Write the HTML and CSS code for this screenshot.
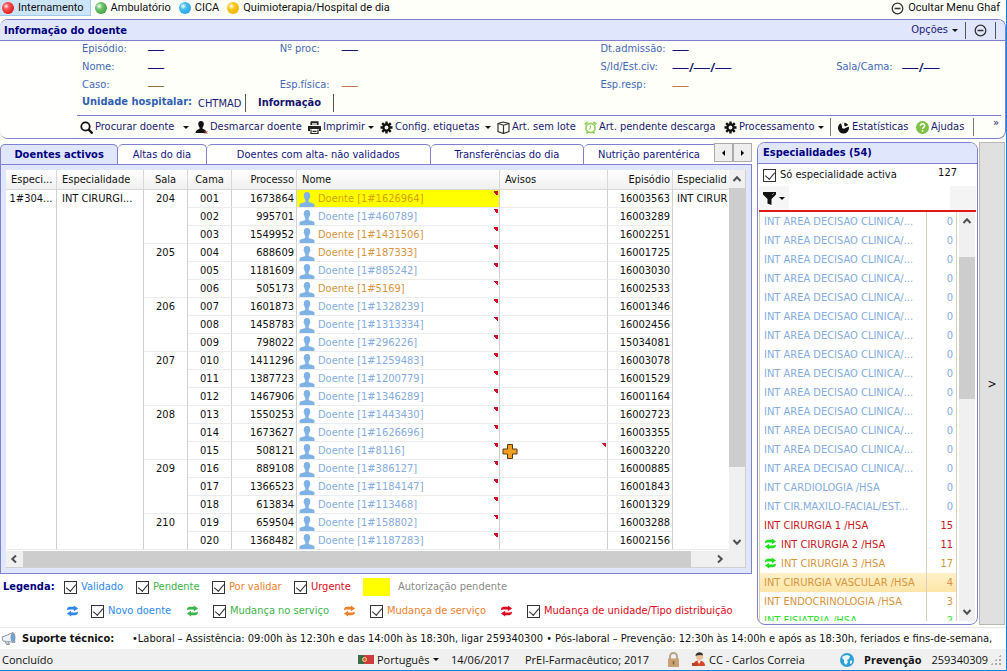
FILE: index.html
```
<!DOCTYPE html>
<html lang="pt">
<head>
<meta charset="utf-8">
<title>Informação do doente</title>
<link rel="stylesheet" href="styles.css">
</head>
<body>
<svg class="defs" aria-hidden="true">
  <symbol id="person" viewBox="0 0 16 15"><path d="M8 0c2.300 0 3.300 1.500 3.100 3.600C11.700 4 11.300 5.500 10.700 5.700 10.500 7 10 7.500 9.700 8v2c1.500.9 5 1 5.800 2.400V15H.5v-2.600C1.300 11 4.800 10.900 6.300 10V8C6 7.500 5.500 7 5.300 5.700 4.700 5.500 4.300 4 4.900 3.600 4.700 1.500 5.700 0 8 0z" fill="#7fb2e5"/></symbol>
  <symbol id="swap" viewBox="0 0 14 12"><path d="M1 5.400c0-2.400 1.200-3.900 3-3.900h4.500V0L13 3.200 8.500 6.200V4.500H4.200C2.800 4.500 2 4.600 1 5.400zM13 6.600c0 2.400-1.200 3.900-3 3.900H5.500V12L1 8.800l4.500-3v1.700h4.300c1.400 0 2.200-.1 3.200-.9z" fill="currentColor"/></symbol>
  <symbol id="gear" viewBox="0 0 14 14"><path fill="none" stroke="#111" stroke-width="2.600" d="M7 .5v3M7 10.500v3M.5 7h3M10.500 7h3M2.400 2.400l2 2M9.600 9.600l2 2M2.400 11.600l2-2M9.600 4.400l2-2"/><circle cx="7" cy="7" r="3.300" fill="none" stroke="#111" stroke-width="2.400"/></symbol>
  <symbol id="minus" viewBox="0 0 13 13"><circle cx="6.500" cy="6.500" r="5.300" fill="none" stroke="#333" stroke-width="1.300"/><path d="M3.500 6.500h6" stroke="#333" stroke-width="1.600"/></symbol>
  <symbol id="chev" viewBox="0 0 10 10"><path d="M1.500 7L5 3.300 8.500 7" fill="none" stroke="#505050" stroke-width="2"/></symbol>
</svg>

<nav class="menu">
  <button class="menu-item active"><span class="ball red"></span>Internamento</button>
  <button class="menu-item"><span class="ball green"></span>Ambulatório</button>
  <button class="menu-item"><span class="ball blue"></span>CICA</button>
  <button class="menu-item"><span class="ball gold"></span>Quimioterapia/Hospital de dia</button>
  <button class="menu-item hide-menu"><svg class="i13"><use href="#minus"/></svg>Ocultar Menu Ghaf</button>
</nav>

<section class="patient">
  <header class="patient-head">
    <h1>Informação do doente</h1>
    <button class="options">Opções <span class="caret"></span></button>
    <button class="collapse" aria-label="Recolher"><svg class="i13"><use href="#minus"/></svg></button>
  </header>
  <div class="patient-body">
    <div class="photo"></div>
    <div class="patient-main">
      <dl class="facts">
        <div><dt>Episódio:</dt><dd>—</dd></div>
        <div><dt>Nº proc:</dt><dd>—</dd></div>
        <div><dt>Dt.admissão:</dt><dd>—</dd></div>
        <div></div>
        <div><dt>Nome:</dt><dd>—</dd></div>
        <div></div>
        <div><dt>S/Id/Est.civ:</dt><dd>—<b>/</b>—<b>/</b>—</dd></div>
        <div><dt>Sala/Cama:</dt><dd>—<b>/</b>—</dd></div>
        <div><dt>Caso:</dt><dd class="olive">—</dd></div>
        <div><dt>Esp.física:</dt><dd class="tan">—</dd></div>
        <div><dt>Esp.resp:</dt><dd class="tan">—</dd></div>
        <div></div>
      </dl>
      <div class="unit">
        <strong>Unidade hospitalar:</strong><span class="unit-name">CHTMAD</span>
        <button class="unit-info">Informação</button>
      </div>
      <div class="toolbar">
        <button class="w-search"><svg class="i13" viewBox="0 0 13 13"><circle cx="5.500" cy="5.500" r="4.200" fill="none" stroke="#111" stroke-width="1.800"/><path d="M8.500 8.500l4 4" stroke="#111" stroke-width="2.400"/></svg>Procurar doente<span class="caret"></span></button>
        <button class="w-clear"><svg class="i13" viewBox="0 0 13 13"><path d="M6 0c2 0 3 1.400 2.800 3.300C8.700 5 8 6 7.500 6.600v1.200c1.200.8 3.900 1 4.300 4.200H.5c.3-3.200 3-3.400 4.100-4.200V6.600C4 6 3.400 5 3.300 3.300 3.100 1.400 4 0 6 0z" fill="#111"/><path d="M9.500 10l3 3M12.500 10l-3 3" stroke="#c55" stroke-width="1"/></svg>Desmarcar doente</button>
        <button class="w-print"><svg class="i13" viewBox="0 0 13 13"><path d="M3 1h7v3H3zM0 5h13v5h-2V8H2v2H0z" fill="#222"/><path d="M3 .8h7V4M3 4V.8M3 8.500v4h7v-4M4.500 10.300h4" fill="none" stroke="#222" stroke-width="1.200"/><path d="M4 2h5v2H4z" fill="#bbb"/></svg>Imprimir<span class="caret"></span></button>
        <button class="w-config"><svg class="i13"><use href="#gear"/></svg>Config. etiquetas<span class="caret"></span></button>
        <button class="w-lot"><svg class="i13" viewBox="0 0 13 13"><path d="M1 2.500L6 1l6 1.500v8L6.500 12.500 1 10.500zM1 2.500l5.500 1.700L12 2.500M6.500 4.200v8.300" fill="none" stroke="#333" stroke-width="1.200"/></svg>Art. sem lote</button>
        <button class="w-alarm"><svg class="i13" viewBox="0 0 13 13"><circle cx="6.500" cy="7" r="4.600" fill="none" stroke="#8fd05a" stroke-width="1.700"/><path d="M.8 3.500L3.500.9M12.200 3.500L9.500.9M2.500 12.500l1.500-2M10.500 12.500L9 10.500" stroke="#8fd05a" stroke-width="1.800"/><path d="M6.500 4.500V7.500L4.800 8.500" fill="none" stroke="#8fd05a"/></svg>Art. pendente descarga</button>
        <button class="w-proc"><svg class="i13"><use href="#gear"/></svg>Processamento<span class="caret"></span></button>
        <button class="w-stats sep-left"><svg class="i13" viewBox="0 0 13 13"><circle cx="6.500" cy="7" r="5.500" fill="#111"/><path d="M6.500 7L3.800 0M6.500 7l5.800-2.500M6.500 7v-7" stroke="#fffffa" stroke-width="1.500"/><circle cx="6.500" cy="6" r="1.600" fill="#fffffa"/></svg>Estatísticas</button>
        <button class="w-help"><svg class="i13" viewBox="0 0 13 13"><circle cx="6.500" cy="6.500" r="6.500" fill="#7cc142"/><path d="M4.300 5c0-3 4.600-2.800 4.400-.1C8.600 6.300 6.600 6.300 6.500 8M6.500 9v1.700" fill="none" stroke="#fff" stroke-width="1.500"/></svg>Ajudas</button>
        <button class="more sep-left" aria-label="Mais">»</button>
      </div>
    </div>
  </div>
</section>

<main class="work">
  <div class="left">
    <div class="tabs">
      <div class="tablist" role="tablist">
        <button role="tab" class="tab t1 on">Doentes activos</button>
        <button role="tab" class="tab t2">Altas do dia</button>
        <button role="tab" class="tab t3">Doentes com alta- não validados</button>
        <button role="tab" class="tab t4">Transferências do dia</button>
        <button role="tab" class="tab t5">Nutrição parentérica</button>
      </div>
      <button class="tabnav" aria-label="Anterior"><span class="tri tri-l"></span></button>
      <button class="tabnav" aria-label="Seguinte"><span class="tri tri-r"></span></button>
    </div>
    <div class="panel">
      <div class="grid">
        <div class="table-wrap">
          <table>
            <colgroup><col class="c1"><col class="c2"><col class="c3"><col class="c3"><col class="c5"><col><col class="c7"><col class="c5"><col class="c9"></colgroup>
            <thead><tr><th>Especi...</th><th>Especialidade</th><th class="c">Sala</th><th class="c">Cama</th><th class="r">Processo</th><th>Nome</th><th>Avisos</th><th class="r">Episódio</th><th>Especialid</th></tr></thead>
            <tbody>
              <tr><td rowspan="20" class="c">1#304...</td><td rowspan="20">INT CIRURGI...</td><td rowspan="3" class="c">204</td><td class="c">001</td><td class="r">1673864</td><td class="n o hl"><svg><use href="#person"/></svg>Doente [1#1626964]</td><td></td><td class="r">16003563</td><td rowspan="20">INT CIRUR</td></tr>
              <tr><td class="c">002</td><td class="r">995701</td><td class="n"><svg><use href="#person"/></svg>Doente [1#460789]</td><td></td><td class="r">16003289</td></tr>
              <tr><td class="c">003</td><td class="r">1549952</td><td class="n o"><svg><use href="#person"/></svg>Doente [1#1431506]</td><td></td><td class="r">16002251</td></tr>
              <tr><td rowspan="3" class="c">205</td><td class="c">004</td><td class="r">688609</td><td class="n o"><svg><use href="#person"/></svg>Doente [1#187333]</td><td></td><td class="r">16001725</td></tr>
              <tr><td class="c">005</td><td class="r">1181609</td><td class="n"><svg><use href="#person"/></svg>Doente [1#885242]</td><td></td><td class="r">16003030</td></tr>
              <tr><td class="c">006</td><td class="r">505173</td><td class="n o"><svg><use href="#person"/></svg>Doente [1#5169]</td><td></td><td class="r">16002533</td></tr>
              <tr><td rowspan="3" class="c">206</td><td class="c">007</td><td class="r">1601873</td><td class="n"><svg><use href="#person"/></svg>Doente [1#1328239]</td><td></td><td class="r">16001346</td></tr>
              <tr><td class="c">008</td><td class="r">1458783</td><td class="n"><svg><use href="#person"/></svg>Doente [1#1313334]</td><td></td><td class="r">16002456</td></tr>
              <tr><td class="c">009</td><td class="r">798022</td><td class="n"><svg><use href="#person"/></svg>Doente [1#296226]</td><td></td><td class="r">15034081</td></tr>
              <tr><td rowspan="3" class="c">207</td><td class="c">010</td><td class="r">1411296</td><td class="n"><svg><use href="#person"/></svg>Doente [1#1259483]</td><td></td><td class="r">16003078</td></tr>
              <tr><td class="c">011</td><td class="r">1387723</td><td class="n"><svg><use href="#person"/></svg>Doente [1#1200779]</td><td></td><td class="r">16001529</td></tr>
              <tr><td class="c">012</td><td class="r">1467906</td><td class="n"><svg><use href="#person"/></svg>Doente [1#1346289]</td><td></td><td class="r">16001164</td></tr>
              <tr><td rowspan="3" class="c">208</td><td class="c">013</td><td class="r">1550253</td><td class="n"><svg><use href="#person"/></svg>Doente [1#1443430]</td><td></td><td class="r">16002723</td></tr>
              <tr><td class="c">014</td><td class="r">1673627</td><td class="n"><svg><use href="#person"/></svg>Doente [1#1626696]</td><td></td><td class="r">16003355</td></tr>
              <tr><td class="c">015</td><td class="r">508121</td><td class="n"><svg><use href="#person"/></svg>Doente [1#8116]</td><td class="alert"><svg viewBox="0 0 15 15"><path d="M5 .5h5V5h4.500v5H10v4.500H5V10H.5V5H5z" fill="#f0a020" stroke="#5a3a10"/></svg></td><td class="r">16003220</td></tr>
              <tr><td rowspan="3" class="c">209</td><td class="c">016</td><td class="r">889108</td><td class="n"><svg><use href="#person"/></svg>Doente [1#386127]</td><td></td><td class="r">16000885</td></tr>
              <tr><td class="c">017</td><td class="r">1366523</td><td class="n"><svg><use href="#person"/></svg>Doente [1#1184147]</td><td></td><td class="r">16001843</td></tr>
              <tr><td class="c">018</td><td class="r">613834</td><td class="n"><svg><use href="#person"/></svg>Doente [1#113468]</td><td></td><td class="r">16001329</td></tr>
              <tr><td rowspan="2" class="c">210</td><td class="c">019</td><td class="r">659504</td><td class="n"><svg><use href="#person"/></svg>Doente [1#158802]</td><td></td><td class="r">16003288</td></tr>
              <tr><td class="c">020</td><td class="r">1368482</td><td class="n"><svg><use href="#person"/></svg>Doente [1#1187283]</td><td></td><td class="r">16002156</td></tr>
            </tbody>
          </table>
        </div>
        <div class="vbar"><svg class="chev"><use href="#chev"/></svg><div class="track"><div class="thumb main-thumb"></div></div><svg class="chev down"><use href="#chev"/></svg></div>
        <div class="hbar"><svg class="chev left-c"><use href="#chev"/></svg><div class="track"><div class="thumb"></div></div><svg class="chev right-c"><use href="#chev"/></svg></div>
      </div>
    </div>
    <div class="legend">
      <div class="legend-row">
        <strong>Legenda:</strong>
        <label class="k-blue l1"><input type="checkbox" checked>Validado</label>
        <label class="k-green l2"><input type="checkbox" checked>Pendente</label>
        <label class="k-orange l2"><input type="checkbox" checked>Por validar</label>
        <label class="k-red l3"><input type="checkbox" checked>Urgente</label>
        <span class="swatch"></span><span class="k-gray">Autorização pendente</span>
      </div>
      <div class="legend-row second">
        <label class="k-blue m1"><svg><use href="#swap"/></svg><input type="checkbox" checked>Novo doente</label>
        <label class="k-green m2"><svg><use href="#swap"/></svg><input type="checkbox" checked>Mudança no serviço</label>
        <label class="k-orange m2"><svg><use href="#swap"/></svg><input type="checkbox" checked>Mudança de serviço</label>
        <label class="k-red"><svg><use href="#swap"/></svg><input type="checkbox" checked>Mudança de unidade/Tipo distribuição</label>
      </div>
    </div>
  </div>

  <aside class="spec">
    <h2>Especialidades (54)</h2>
    <div class="spec-active"><label><input type="checkbox" checked>Só especialidade activa</label><span>127</span></div>
    <div class="filter">
      <button aria-label="Filtrar"><svg class="i13" viewBox="0 0 13 13"><path d="M0 0h13v2.500L8.500 7v6L4.500 11.500V7L0 2.500z" fill="#111"/><path d="M9.500 2.500l1-1" stroke="#fff"/></svg><span class="caret"></span></button>
      <input type="text" aria-label="Filtro">
    </div>
    <div class="spec-list">
      <ul>
        <li><span>INT AREA DECISAO CLINICA/...</span><b>0</b></li>
        <li><span>INT AREA DECISAO CLINICA/...</span><b>0</b></li>
        <li><span>INT AREA DECISAO CLINICA/...</span><b>0</b></li>
        <li><span>INT AREA DECISAO CLINICA/...</span><b>0</b></li>
        <li><span>INT AREA DECISAO CLINICA/...</span><b>0</b></li>
        <li><span>INT AREA DECISAO CLINICA/...</span><b>0</b></li>
        <li><span>INT AREA DECISAO CLINICA/...</span><b>0</b></li>
        <li><span>INT AREA DECISAO CLINICA/...</span><b>0</b></li>
        <li><span>INT AREA DECISAO CLINICA/...</span><b>0</b></li>
        <li><span>INT AREA DECISAO CLINICA/...</span><b>0</b></li>
        <li><span>INT AREA DECISAO CLINICA/...</span><b>0</b></li>
        <li><span>INT AREA DECISAO CLINICA/...</span><b>0</b></li>
        <li><span>INT AREA DECISAO CLINICA/...</span><b>0</b></li>
        <li><span>INT AREA DECISAO CLINICA/...</span><b>0</b></li>
        <li><span>INT CARDIOLOGIA /HSA</span><b>0</b></li>
        <li><span>INT CIR.MAXILO-FACIAL/EST...</span><b>0</b></li>
        <li class="s-red"><span>INT CIRURGIA 1 /HSA</span><b>15</b></li>
        <li class="s-red"><span><svg><use href="#swap"/></svg>INT CIRURGIA 2 /HSA</span><b>11</b></li>
        <li class="s-or"><span><svg><use href="#swap"/></svg>INT CIRURGIA 3 /HSA</span><b>17</b></li>
        <li class="s-or sel"><span>INT CIRURGIA VASCULAR /HSA</span><b>4</b></li>
        <li class="s-or"><span>INT ENDOCRINOLOGIA /HSA</span><b>3</b></li>
        <li class="s-gr"><span>INT FISIATRIA /HSA</span><b>2</b></li>
      </ul>
      <div class="vbar"><svg class="chev"><use href="#chev"/></svg><div class="track"><div class="thumb spec-thumb"></div></div><svg class="chev down"><use href="#chev"/></svg></div>
    </div>
  </aside>
  <button class="drawer">&gt;</button>
</main>

<div class="support">
  <svg viewBox="0 0 15 13"><path d="M1 5l3-1 8-3.500 2 10L6 9.500 2 9z" fill="#eef2f6" stroke="#8a98a6"/><path d="M4 9l1.500 3.500h3L7 9.500" fill="#c3ccd4" stroke="#8a98a6"/><ellipse cx="12" cy="5.500" rx="2" ry="4.500" fill="#6aa5dc" stroke="#8a98a6"/></svg>
  <strong>Suporte técnico:</strong>
  <p>•Laboral – Assistência: 09:00h às 12:30h e das 14:00h às 18:30h, ligar 259340300 • Pós-laboral – Prevenção: 12:30h às 14:00h e após as 18:30h, feriados e fins-de-semana,</p>
</div>

<footer class="status">
  <span class="done">Concluído</span>
  <button class="lang"><svg viewBox="0 0 16 9"><path d="M0 0h6v9H0z" fill="#3c6b4c"/><path d="M6 0h10v9H6z" fill="#cf3c3c"/><circle cx="6.500" cy="4.500" r="2" fill="#d85a3a" stroke="#eddc7a"/></svg>Português <span class="caret"></span></button>
  <span class="date">14/06/2017</span>
  <span class="app">PrEI-Farmacêutico; 2017</span>
  <svg class="lock" viewBox="0 0 13 15"><path d="M3 7V4.500a3.500 3.500 0 017 0V7" fill="none" stroke="#b9a48c" stroke-width="2"/><path d="M1 6.500h11V15H1z" fill="#c9a273"/><path d="M6.500 9v3.500" stroke="#7d6040" stroke-width="1.500"/></svg>
  <span class="user"><svg viewBox="0 0 14 15"><circle cx="7.500" cy="4.500" r="3.500" fill="#f0c090"/><path d="M3.500 4C3.500-.5 11-1 11 3.500 9 2.500 6 3 3.500 4z" fill="#333"/><path d="M1 14c0-4 3-5.500 6-5.500s6 1.500 6 5.500z" fill="#d9482a"/><path d="M5.500 8.500L7 12l2-3.500z" fill="#fff"/><path d="M0 11h5v3H0z" fill="#b5442c"/></svg>CC - Carlos Correia</span>
  <span class="oncall"><svg viewBox="0 0 14 14"><circle cx="7" cy="7" r="7" fill="#2b9fd8"/><path d="M3 3l4-1 3 1-1 3-2 1 1 2-2 3-2-2 0-3-2-2zM10 8l2-1v3l-2 1z" fill="#e8f6fd"/></svg><strong>Prevenção</strong>259340309</span>
  <span class="grip"></span>
</footer>
</body>
</html>
```
FILE: styles.css
```
* { box-sizing: border-box; }
html, body { height: 100%; }
body {
  margin: 0;
  display: flex;
  flex-direction: column;
  overflow: hidden;
  font: 11px/18px "DejaVu Sans Condensed", "DejaVu Sans", sans-serif;
  color: #111;
  background: #fffffa;
  border-right: 1px solid #1a80d8;
  border-bottom: 1px solid #1a80d8;
}
button, input { font: inherit; color: inherit; }
button { background: none; border: 0; padding: 0; white-space: nowrap; display: flex; align-items: center; }
svg { flex: none; }
h1, h2, p, dl, dd, ul { margin: 0; padding: 0; }
.defs { position: absolute; width: 0; height: 0; }
.i13 { width: 13px; height: 13px; }
.caret { border: 3px solid transparent; border-top-color: #111; border-bottom: 0; width: 0; height: 0; }

.menu { display: flex; height: 17px; font-family: Roboto, sans-serif; flex: none; }
.menu-item { gap: 4px; padding: 0 6px 0 2px; height: 16px; }
.menu-item.active { background: #cce4f9; border: 1px solid #9fcaf0; border-top: 0; border-left: 0; margin-right: 2px; }
.hide-menu { margin-left: auto; padding-right: 6px; }
.ball { width: 12px; height: 12px; border-radius: 50%; }
.red { background: radial-gradient(circle at 35% 35%, #fff 0, #f55 25%, #e02020 70%); }
.green { background: radial-gradient(circle at 35% 35%, #fff 0, #6cc46c 30%, #44a044 75%); }
.blue { background: radial-gradient(circle at 35% 35%, #fff 0, #45bdf2 30%, #2aa5e0 75%); }
.gold { background: radial-gradient(circle at 35% 35%, #fff 0, #fbc81e 30%, #f0b400 75%); }

.patient { flex: none; margin-top: 2px; border: 1px solid #8080d0; border-radius: 8px; border-left-width: 0; overflow: hidden; }
.patient-head { display: flex; height: 21px; background: #e0e6fc; border-bottom: 1px solid #8080d0; align-items: center; padding-right: 9px; }
h1, h2 { font-size: 11px; line-height: 19px; color: #000080; }
h1 { padding-left: 4px; flex: 1; }
.options { gap: 4px; color: #1a1a80; padding-right: 7px; }
.collapse { border-left: 1px solid #555; border-right: 1px solid #555; height: 17px; padding: 0 8px; }
.patient-body { display: flex; }
.photo { width: 77px; background: #fffffe; }
.patient-main { flex: 1; min-width: 0; }
.facts { display: grid; grid-template-columns: 198fr 321fr 236fr 169fr; padding-left: 5px; color: #4468b4; height: 53px; align-content: start; grid-auto-rows: 18px; line-height: 15px; }
.facts > div { display: flex; }
.facts dt { min-width: 66px; }
.facts > div:nth-child(4n+2) dt { min-width: 62px; }
.facts > div:nth-child(4n+3) dt { min-width: 72px; }
.facts dd { font-family: "Liberation Serif", serif; font-size: 16px; line-height: 15px; color: #14146e; }
.facts b { font-family: "Liberation Sans", sans-serif; font-size: 12px; padding: 0 1px; font-style: italic; }
.facts dd.tan { color: #c87848; }
.facts dd.olive { color: #8c7040; }
.unit { display: flex; height: 22px; align-items: stretch; padding-left: 5px; margin: 0 4px 0 0; border-bottom: 1px solid #8080d0; }
.unit strong { line-height: 16px; color: #3060b0; min-width: 116px; }
.unit-name { color: #1a1a70; line-height: 20px; width: 47px; }
.unit-info { font-weight: bold; color: #14146e; margin-bottom: 3px; width: 89px; justify-content: center; border-left: 1px solid #555; border-right: 1px solid #555; }
.toolbar { display: flex; height: 22px; align-items: center; color: #1a1a70; padding-left: 3px; }
.toolbar button { gap: 2px; height: 18px; }
.toolbar .caret { margin-left: auto; margin-right: 6px; }
.w-search { width: 115px; }
.w-clear { width: 113px; }
.w-print { width: 72px; }
.w-config { width: 117px; }
.w-lot { width: 87px; }
.w-alarm { width: 140px; }
.w-proc { width: 106px; }
.w-stats { width: 86px; }
.w-help { width: 57px; }
.sep-left { border-left: 1px solid #777; padding-left: 6px; }
.toolbar .more { flex: 1; justify-content: flex-end; padding-right: 6px; line-height: 10px; align-items: flex-start; }

.work { flex: 1; min-height: 0; display: flex; padding-top: 3px; }
.left { flex: 1; min-width: 0; display: flex; flex-direction: column; margin-right: 5px; }
.tabs { display: flex; height: 22px; flex: none; }
.tablist { display: flex; flex: 1; min-width: 0; overflow: hidden; padding-top: 2px; }
.tab { justify-content: center; color: #14147c; border: 1px solid #8080d0; border-bottom: 0; border-left-width: 0; border-radius: 5px 5px 0 0; background: #fffffe; overflow: hidden; }
.tab.on { background: #e0e6fc; font-weight: bold; color: #000080; border-left-width: 1px; }
.t1 { flex: 117; } .t2 { flex: 88; } .t3 { flex: 225; } .t4 { flex: 153; } .t5 { flex: 131; border-right: 0; border-top-right-radius: 0; }
.tabnav { width: 19px; height: 19px; margin-top: 1px; border: 1px solid #aaa; background: #eee; justify-content: center; }
.tri { border: 3px solid transparent; }
.tri-l { border-right-color: #000; border-left: 0; }
.tri-r { border-left-color: #000; border-right: 0; }
.panel { flex: 1; min-height: 0; border: 1px solid #8080d0; background: #e0e6fc; padding: 5px; }
.grid { height: 100%; display: grid; grid-template: minmax(0, 1fr) 16px / minmax(0, 1fr) 16px; background: #f0f0f0; border: 1px solid #d0d0d0; border-width: 0 1px 1px 0; }
.table-wrap { overflow: hidden; background: #fff; }
table { width: 100%; table-layout: fixed; border-collapse: separate; border-spacing: 0; }
.c1 { width: 51px; } .c2 { width: 87px; } .c3 { width: 44px; } .c5 { width: 65px; } .c7 { width: 108px; } .c9 { width: 56px; }
th { height: 20px; padding: 0 5px; text-align: left; font-weight: normal; background: linear-gradient(#fff, #f0f0f0); border-right: 1px solid #d8d8d8; border-bottom: 1px solid #d8d8d8; overflow: hidden; white-space: nowrap; line-height: 18px; }
td { height: 18px; padding: 0 5px; border-right: 1px solid #d0d0d0; border-bottom: 1px solid #ececec; white-space: nowrap; overflow: hidden; line-height: 17px; vertical-align: top; }
.c { text-align: center; padding: 0; }
.r { text-align: right; padding: 0 2px 0 0; }
td.n { color: #84ace0; padding: 0 0 0 2px; background: linear-gradient(to top right, transparent 50%, #d0112b 50%) right 1px top 1px / 5px 5px no-repeat; }
td.o { color: #d89440; }
td.hl { background-color: #ff0; color: #d8a000; }
td svg { width: 16px; height: 15px; margin: 2px 3px 0 0; vertical-align: top; }
td.alert { padding: 0 0 0 2px; background: linear-gradient(to top right, transparent 50%, #d0112b 50%) right 1px top 1px / 5px 5px no-repeat; }
tr:first-child td:last-child, th:last-child { border-right: 0; padding-right: 0; padding-left: 4px; }

.vbar { display: flex; flex-direction: column; align-items: center; background: #f0f0f0; }
.hbar { display: flex; align-items: center; background: #f0f0f0; }
.chev { width: 10px; height: 10px; margin: 4px 3px; }
.down { transform: rotate(180deg); }
.left-c { transform: rotate(-90deg); }
.right-c { transform: rotate(90deg); margin: 0 4px; }
.track { flex: 1; align-self: stretch; min-height: 0; }
.thumb { background: #cdcdcd; height: 100%; }
.main-thumb { height: 81%; }
.hbar .thumb { width: 97%; margin-left: 1px; }
.spec-thumb { height: 38%; margin-top: 27px; }

.legend { flex: none; height: 53px; background: #fff; color: #000080; }
.legend-row { display: flex; align-items: center; height: 26px; padding-left: 3px; white-space: nowrap; }
.second { padding-left: 66px; height: 22px; }
.legend strong { width: 61px; }
.legend label { display: flex; align-items: center; gap: 4px; }
input[type="checkbox"] { appearance: none; width: 13px; height: 13px; margin: 0; border: 1px solid #333; background: #fff; flex: none; display: flex; justify-content: center; }
input[type="checkbox"]::before { content: ""; width: 5px; height: 8px; border: solid #333; border-width: 0 1px 1px 0; transform: rotate(40deg); }
.l1 { width: 72px; } .l2 { width: 76px; } .l2 + .l2 { width: 82px; } .l3 { width: 69px; }
.m1 { width: 120px; } .m2 { width: 157px; }
.second svg { width: 13px; height: 12px; margin-right: 10px; }
.second .m1 svg { margin-right: 8px; }
.swatch { width: 27px; height: 18px; background: #ff0; margin-right: 8px; }
.k-blue { color: #2c88ec; } .k-green { color: #3cb44a; } .k-orange { color: #f08028; } .k-red { color: #e00820; } .k-gray { color: #8a8a8a; }

.spec { width: 221px; flex: none; margin-bottom: 2px; border: 1px solid #8080d0; border-radius: 8px; background: #fff; display: flex; flex-direction: column; overflow: hidden; }
h2 { background: #e0e6fc; border-bottom: 1px solid #8080d0; height: 21px; padding-left: 5px; flex: none; }
.spec-active { display: flex; justify-content: space-between; padding: 0 20px 0 5px; height: 22px; flex: none; }
.spec-active label { display: flex; align-items: center; gap: 4px; }
.filter { display: flex; height: 26px; border-bottom: 2px solid #e01818; margin: 0 1px; flex: none; }
.filter button { width: 30px; padding-left: 4px; gap: 3px; background: #f6f6f6; }
.filter input { flex: 1; min-width: 0; border: 0; background: linear-gradient(to left, #f4f4f4 26px, #fff 26px); }
.spec-list { flex: 1; min-height: 0; display: flex; overflow: hidden; margin: 0 2px 3px 1px; border-left: 1px solid #d8d0b8; }
.spec-list ul { flex: 1; min-width: 0; list-style: none; overflow: hidden; margin-right: 2px; }
.spec-list li { display: flex; height: 19px; line-height: 20px; color: #84ace0; white-space: nowrap; }
.spec-list li span { flex: 1; min-width: 0; overflow: hidden; padding-left: 4px; border-right: 1px solid #d8d0b8; }
.spec-list li b { width: 30px; font-weight: normal; text-align: right; padding-right: 3px; border-right: 1px solid #d8d0b8; }
.spec-list li svg { width: 13px; height: 12px; margin-right: 4px; vertical-align: -2px; color: #1ee01e; }
.spec-list .s-red { color: #c81820; } .spec-list .s-or { color: #d89440; } .spec-list .s-gr { color: #30e030; }
.spec-list .sel { background: linear-gradient(#fff0c8, #fde6a8); }
.drawer { width: 26px; margin: 0 1px 2px 1px; background: #e0e0e0; border: 1px solid #b8b8b8; justify-content: center; font-size: 12px; flex: none; }

.support { display: flex; align-items: center; height: 22px; flex: none; border-top: 1px solid #e8e8e8; background: #fff; white-space: nowrap; overflow: hidden; }
.support svg { width: 15px; height: 13px; margin: 0 6px 0 1px; }
.support strong { width: 110px; }
.status { display: flex; align-items: center; height: 21px; flex: none; background: #f0f0f0; font-family: "Open Sans", sans-serif; white-space: nowrap; padding-left: 2px; }
.done { flex: 1; }
.lang { gap: 3px; width: 93px; }
.lang svg { width: 16px; height: 9px; }
.date { width: 74px; }
.app { width: 142px; }
.lock { width: 13px; height: 15px; margin-right: 12px; }
.user { display: flex; align-items: center; gap: 3px; width: 148px; }
.user svg { width: 14px; height: 15px; }
.oncall { display: flex; align-items: center; gap: 10px; width: 150px; }
.oncall svg { width: 14px; height: 14px; }
.grip { width: 12px; height: 12px; margin-right: 4px; background: radial-gradient(#aaa 1px, transparent 1px) 0 0 / 4px 4px; clip-path: polygon(100% 0, 100% 100%, 0 100%); }
```
